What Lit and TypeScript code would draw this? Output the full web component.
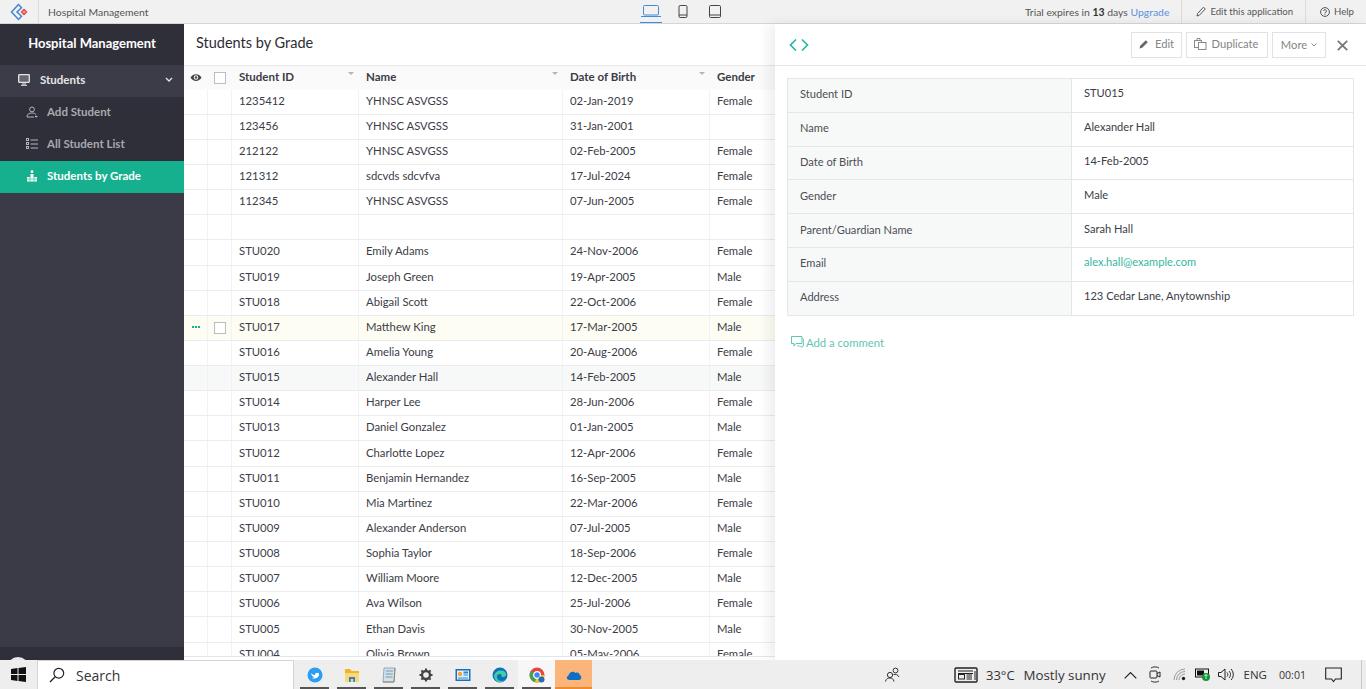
import { LitElement, css, html, svg } from 'lit';
import { customElement } from 'lit/decorators.js';

const ROWS = [
  ['1235412', 'YHNSC ASVGSS', '02-Jan-2019', 'Female'],
  ['123456', 'YHNSC ASVGSS', '31-Jan-2001', ''],
  ['212122', 'YHNSC ASVGSS', '02-Feb-2005', 'Female'],
  ['121312', 'sdcvds sdcvfva', '17-Jul-2024', 'Female'],
  ['112345', 'YHNSC ASVGSS', '07-Jun-2005', 'Female'],
  ['', '', '', ''],
  ['STU020', 'Emily Adams', '24-Nov-2006', 'Female'],
  ['STU019', 'Joseph Green', '19-Apr-2005', 'Male'],
  ['STU018', 'Abigail Scott', '22-Oct-2006', 'Female'],
  ['STU017', 'Matthew King', '17-Mar-2005', 'Male'],
  ['STU016', 'Amelia Young', '20-Aug-2006', 'Female'],
  ['STU015', 'Alexander Hall', '14-Feb-2005', 'Male'],
  ['STU014', 'Harper Lee', '28-Jun-2006', 'Female'],
  ['STU013', 'Daniel Gonzalez', '01-Jan-2005', 'Male'],
  ['STU012', 'Charlotte Lopez', '12-Apr-2006', 'Female'],
  ['STU011', 'Benjamin Hernandez', '16-Sep-2005', 'Male'],
  ['STU010', 'Mia Martinez', '22-Mar-2006', 'Female'],
  ['STU009', 'Alexander Anderson', '07-Jul-2005', 'Male'],
  ['STU008', 'Sophia Taylor', '18-Sep-2006', 'Female'],
  ['STU007', 'William Moore', '12-Dec-2005', 'Male'],
  ['STU006', 'Ava Wilson', '25-Jul-2006', 'Female'],
  ['STU005', 'Ethan Davis', '30-Nov-2005', 'Male'],
  ['STU004', 'Olivia Brown', '05-May-2006', 'Female'],
];

const DETAILS = [
  ['Student ID', 'STU015'],
  ['Name', 'Alexander Hall'],
  ['Date of Birth', '14-Feb-2005'],
  ['Gender', 'Male'],
  ['Parent/Guardian Name', 'Sarah Hall'],
  ['Email', 'alex.hall@example.com'],
  ['Address', '123 Cedar Lane, Anytownship'],
];

const icon = (w: number, h: number, body: unknown) =>
  html`<svg width=${w} height=${h} viewBox="0 0 ${w} ${h}" fill="none">${body}</svg>`;

@customElement('app-root')
export class AppRoot extends LitElement {
  static styles = css`
    :host {
      display: flex;
      flex-direction: column;
      width: 1366px;
      height: 689px;
      overflow: hidden;
      font-family: Lato, 'Liberation Sans', sans-serif;
      font-size: 11.3px;
      color: #3c3c46;
      background: #fff;
    }
    svg {
      display: block;
      flex: none;
    }

    /* top bar */
    .topbar {
      flex: none;
      height: 23px;
      display: flex;
      align-items: center;
      background: #f1f1f1;
      border-bottom: 1px solid #d6d6d6;
      position: relative;
      font-size: 10.4px;
      color: #555;
    }
    .logo {
      width: 38px;
      height: 23px;
      display: flex;
      align-items: center;
      justify-content: center;
      border-right: 1px solid #dcdcdc;
    }
    .app-name {
      padding-left: 9px;
    }
    .devices {
      position: absolute;
      left: 640px;
      top: 0;
      display: flex;
      height: 23px;
    }
    .device {
      width: 22px;
      margin-right: 10px;
      height: 23px;
      display: flex;
      align-items: flex-start;
      justify-content: center;
      padding-top: 5px;
      box-sizing: border-box;
    }
    .device.on {
      border-bottom: 1px solid #3f8be0;
    }
    .top-right {
      margin-left: auto;
      display: flex;
      height: 23px;
      align-items: center;
    }
    .trial {
      padding-right: 12px;
      color: #555;
    }
    .trial b {
      font-weight: 700;
      color: #333;
    }
    .trial a {
      color: #5b8fdc;
    }
    .top-link {
      display: flex;
      align-items: center;
      gap: 4px;
      height: 23px;
      border-left: 1px solid #dcdcdc;
      padding: 0 12px 0 14px;
      font-size: 9.6px;
    }

    /* body */
    .body {
      flex: 1;
      min-height: 0;
      display: flex;
    }

    .sidebar {
      flex: none;
      width: 184px;
      display: flex;
      flex-direction: column;
      background: #3a3b46;
      color: #fff;
    }
    .brand {
      height: 38px;
      padding-bottom: 3px;
      background: #2f2f3a;
      display: flex;
      align-items: center;
      justify-content: center;
      font-size: 13px;
      font-weight: 700;
      border-bottom: 1px solid #3a3b46;
    }
    .group {
      height: 27px;
      padding: 0 11px 4px 18px;
      display: flex;
      align-items: center;
      gap: 10px;
      font-weight: 700;
      font-size: 11.5px;
      color: #e6e6e8;
      background: #3b3c47;
    }
    .group span {
      flex: 1;
    }
    .subs {
      background: #2f2f3a;
    }
    .sub {
      height: 32px;
      box-sizing: border-box;
      padding: 0 0 3px 26px;
      display: flex;
      align-items: center;
      gap: 9px;
      color: #a9a9ae;
      font-weight: 700;
      font-size: 11.5px;
    }
    .sub.on {
      background: #16b08f;
      color: #fff;
    }
    .side-foot {
      margin-top: auto;
      height: 13px;
      background: #2f2f3a;
      overflow: hidden;
      position: relative;
    }
    .side-foot i {
      position: absolute;
      left: 7px;
      top: 10px;
      width: 22px;
      height: 22px;
      border-radius: 50%;
      background: #e8e8e8;
    }

    .main {
      flex: none;
      width: 591px;
      min-width: 0;
      display: flex;
      flex-direction: column;
      overflow: hidden;
    }
    .title {
      flex: none;
      height: 37px;
      padding: 0 0 4px 12px;
      display: flex;
      align-items: center;
      font-size: 14.5px;
      color: #2c2c34;
      border-bottom: 1px solid #e8e8e8;
    }
    .grid {
      flex: 1;
      min-height: 0;
      overflow: hidden;
    }
    .grid-end {
      flex: none;
      height: 3px;
      border-top: 1px solid #e4e6ee;
    }
    .row {
      display: grid;
      grid-template-columns: 24px 24px 127px 204px 147px 65px;
      height: 25.15px;
      box-sizing: border-box;
      border-bottom: 1px solid #ececec;
      align-items: stretch;
    }
    .row > div {
      display: flex;
      align-items: center;
      padding: 0 0 3px 7px;
      border-right: 1px solid #f2f2f2;
      white-space: nowrap;
      overflow: hidden;
      box-sizing: border-box;
      min-width: 0;
    }
    .row > div:last-child {
      border-right: none;
    }
    .row.head {
      height: 23.52px;
      background: #fafafa;
      border-bottom: none;
      font-weight: 700;
      font-size: 11.5px;
      color: #3c3c46;
    }
    .row.head > div {
      border-right: none;
      position: relative;
    }
    .row.hover {
      background: #fdfdf3;
    }
    .row.sel {
      background: #f7f9f8;
    }
    .row > .c0 {
      padding: 0 0 1px 6px;
    }
    .row > .c1 {
      padding: 0 0 0 6px;
    }
    .box {
      width: 10px;
      height: 10px;
      border: 1px solid #bdbdbd;
      background: #fff;
    }
    .sort {
      position: absolute;
      right: 5px;
      top: 6px;
      width: 0;
      height: 0;
      border-left: 3px solid transparent;
      border-right: 3px solid transparent;
      border-top: 3px solid #b5b5b5;
    }
    .dots {
      display: flex;
      gap: 1px;
      margin-left: 2px;
    }
    .dots i {
      width: 2px;
      height: 2px;
      background: #16b08f;
    }

    .panel {
      flex: 1;
      min-width: 0;
      background: #fff;
      box-shadow: -6px 0 12px rgba(0, 0, 0, 0.07);
      position: relative;
    }
    .panel-head {
      height: 41px;
      border-bottom: 1px solid #e8e8e8;
      display: flex;
      align-items: center;
      padding: 0 18px 0 14px;
    }
    .actions {
      margin-left: auto;
      display: flex;
      gap: 4px;
      align-items: center;
    }
    .btn {
      height: 26px;
      box-sizing: border-box;
      border: 1px solid #e2e2e2;
      display: flex;
      align-items: center;
      justify-content: center;
      gap: 5px;
      color: #858585;
      font-size: 11.2px;
      padding-bottom: 2px;
    }
    .btn.edit {
      width: 51px;
      gap: 6px;
    }
    .btn.dup {
      width: 82px;
      padding-right: 2px;
    }
    .btn.more {
      width: 54px;
      padding-bottom: 0;
      gap: 4px;
    }
    .close {
      margin: 2px 0 0 7px;
    }
    .detail {
      margin: 12px 12px 0;
      border: 1px solid #e6e6e6;
      border-bottom: none;
      display: grid;
      grid-template-columns: 284px 1fr;
    }
    .detail > div {
      height: 33.8px;
      box-sizing: border-box;
      border-bottom: 1px solid #e6e6e6;
      display: flex;
      align-items: center;
      padding: 0 0 3px 12px;
      font-size: 11.1px;
    }
    .detail .k {
      background: #f7f9f8;
      border-right: 1px solid #e6e6e6;
      color: #4d4d57;
    }
    .detail .v {
      color: #3c3c46;
      padding-bottom: 5px;
    }
    .detail a {
      color: #35b8a0;
    }
    .comment {
      display: flex;
      align-items: center;
      gap: 2px;
      margin: 20px 0 0 16px;
      color: #5fc6b4;
    }

    /* windows taskbar */
    .taskbar {
      flex: none;
      height: 29px;
      background: #eeeeee;
      display: flex;
      align-items: center;
      font-family: 'Open Sans', 'Noto Sans', sans-serif;
      color: #222;
      position: relative;
    }
    .start {
      width: 37px;
      display: flex;
      justify-content: center;
    }
    .search {
      width: 257px;
      height: 29px;
      box-sizing: border-box;
      background: #fff;
      border: 1px solid #d4d4d4;
      border-bottom: none;
      display: flex;
      align-items: center;
      padding-left: 11px;
      gap: 11px;
      font-size: 14px;
      color: #333;
    }
    .apps {
      display: flex;
      height: 29px;
      padding-left: 2px;
    }
    .app {
      width: 37px;
      height: 29px;
      box-sizing: border-box;
      display: flex;
      align-items: center;
      justify-content: center;
      position: relative;
    }
    .app::after {
      content: '';
      position: absolute;
      left: 4px;
      right: 4px;
      bottom: 0;
      height: 2px;
      background: #555;
    }
    .app.lit {
      background: #f7f7f7;
    }
    .app.active {
      background: #fbb57a;
    }
    .app.active::after {
      left: 0;
      right: 0;
      background: #f08a2c;
    }
    .tray {
      margin-left: auto;
      display: flex;
      align-items: center;
      height: 29px;
      font-size: 11.5px;
      color: #333;
    }
    .tray-people {
      margin-right: 54px;
    }
    .tray-news {
      margin-right: 8px;
    }
    .temp {
      font-size: 13px;
      margin-right: 9px;
      white-space: nowrap;
    }
    .sky {
      font-size: 13.3px;
      margin-right: 18px;
      white-space: nowrap;
    }
    .tray-chevron,
    .tray-meet {
      margin-right: 12px;
    }
    .tray-wifi {
      margin-right: 9px;
    }
    .tray-battery {
      margin-right: 7px;
    }
    .tray-sound {
      margin-right: 9px;
    }
    .clock {
      font-size: 10.6px;
      margin: 0 19px 0 12px;
    }
    .show-desktop {
      width: 1px;
      height: 29px;
      background: #c8c8c8;
      margin-left: 19px;
      margin-right: 4px;
    }
  `;

  private renderLogo() {
    return icon(
      18,
      18,
      svg`<path d="M8.5 1.5 L1.5 9 L8.5 16.5 L11.5 13.3 L7 9 L11.5 4.7 Z" stroke="#3f86d8" stroke-width="1.5"/>
        <path d="M14 6.5 L16.5 9 L14 11.5 L11.5 9 Z" fill="#fff" stroke="#e0433e" stroke-width="1.4"/>
        <circle cx="14" cy="9" r="0.8" fill="#e0433e"/>`
    );
  }

  private renderTopbar() {
    return html`
      <div class="topbar">
        <div class="logo">${this.renderLogo()}</div>
        <div class="app-name">Hospital Management</div>
        <div class="devices">
          <div class="device on">
            ${icon(20, 12, svg`<rect x="2.5" y="0.5" width="15" height="9.5" rx="1" stroke="#3f8be0"/><path d="M0 11.5 H20" stroke="#3f8be0"/>`)}
          </div>
          <div class="device">
            ${icon(10, 13, svg`<rect x="1" y="0.5" width="8" height="12" rx="1.2" stroke="#444"/><path d="M1 10 H9" stroke="#444"/>`)}
          </div>
          <div class="device">
            ${icon(12, 13, svg`<rect x="0.5" y="0.5" width="11" height="12" rx="1.2" stroke="#444"/><path d="M0.5 10 H11.5" stroke="#444"/>`)}
          </div>
        </div>
        <div class="top-right">
          <div class="trial">Trial expires in <b>13</b> days <a>Upgrade</a></div>
          <div class="top-link">
            ${icon(10, 11, svg`<path d="M1 10 L1.6 7.5 L7.5 1.2 L9.3 3 L3.3 9.3 Z" stroke="#555"/>`)}
            <span>Edit this application</span>
          </div>
          <div class="top-link">
            ${icon(10, 10, svg`<circle cx="5" cy="5" r="4.4" stroke="#555"/><path d="M3.5 4 A1.5 1.5 0 1 1 5 5.6 V6.4 M5 7.2 V8" stroke="#555" stroke-width="0.9"/>`)}
            <span>Help</span>
          </div>
        </div>
      </div>
    `;
  }

  private renderSidebar() {
    return html`
      <nav class="sidebar">
        <div class="brand">Hospital Management</div>
        <div class="group">
          ${icon(12, 12, svg`<rect x="0.7" y="0.7" width="10.6" height="7.6" rx="0.5" stroke="#e6e6e8" stroke-width="1.3" fill="#e6e6e8" fill-opacity="0.25"/><path d="M4 10 H8 M3 11.3 H9" stroke="#e6e6e8"/>`)}
          <span>Students</span>
          ${icon(8, 5, svg`<path d="M1 1 L4 4 L7 1" stroke="#e6e6e8" stroke-width="1.3"/>`)}
        </div>
        <div class="subs">
          <div class="sub">
            ${icon(12, 12, svg`<circle cx="6" cy="3.4" r="2.4" stroke="#b5b5ba"/><path d="M1 11 C1 8 3 7 6 7 C8 7 9 7.5 10 8.5 M1 11 H8 M10 9.5 V11.5 M9 10.5 H11.5" stroke="#b5b5ba"/>`)}
            <span>Add Student</span>
          </div>
          <div class="sub">
            ${icon(12, 12, svg`<path d="M4.5 2 H12 M4.5 6 H12 M4.5 10 H12" stroke="#b5b5ba"/><rect x="0.5" y="0.5" width="2" height="2" stroke="#b5b5ba"/><rect x="0.5" y="4.5" width="2" height="2" stroke="#b5b5ba"/><rect x="0.5" y="8.5" width="2" height="2" stroke="#b5b5ba"/>`)}
            <span>All Student List</span>
          </div>
          <div class="sub on">
            ${icon(12, 12, svg`<circle cx="6" cy="1.7" r="1.4" fill="#fff"/><path d="M4.5 4 H7.5 V7 H4.5 Z M1 7 H11 V11.5 H1 Z" fill="#fff"/><path d="M1 9 H11 M4 7 V11.5 M8 7 V11.5" stroke="#16b08f" stroke-width="0.6"/>`)}
            <span>Students by Grade</span>
          </div>
        </div>
        <div class="side-foot"><i></i></div>
      </nav>
    `;
  }

  private renderTable() {
    return html`
      <section class="main">
        <div class="title">Students by Grade</div>
        <div class="grid">
          <div class="row head">
            <div class="c0">
              ${icon(12, 9, svg`<path d="M0.5 4.5 C3 0 9 0 11.5 4.5 C9 9 3 9 0.5 4.5 Z" fill="#444"/><circle cx="6" cy="4.5" r="2.2" fill="#fff"/><circle cx="6" cy="4.5" r="1.2" fill="#444"/>`)}
            </div>
            <div class="c1"><span class="box"></span></div>
            <div>Student ID<span class="sort"></span></div>
            <div>Name<span class="sort"></span></div>
            <div>Date of Birth<span class="sort"></span></div>
            <div>Gender</div>
          </div>
          ${ROWS.map((r) => {
            const hover = r[0] === 'STU017';
            const sel = r[0] === 'STU015';
            return html`
              <div class="row ${hover ? 'hover' : ''} ${sel ? 'sel' : ''}">
                <div class="c0">
                  ${hover ? html`<span class="dots"><i></i><i></i><i></i></span>` : ''}
                </div>
                <div class="c1">${hover ? html`<span class="box"></span>` : ''}</div>
                <div>${r[0]}</div>
                <div>${r[1]}</div>
                <div>${r[2]}</div>
                <div>${r[3]}</div>
              </div>
            `;
          })}
        </div>
        <div class="grid-end"></div>
      </section>
    `;
  }

  private renderPanel() {
    return html`
      <aside class="panel">
        <div class="panel-head">
          ${icon(20, 14, svg`<path d="M7 1.5 L1.5 7 L7 12.5 M13 1.5 L18.5 7 L13 12.5" stroke="#25b8a0" stroke-width="1.7"/>`)}
          <div class="actions">
            <div class="btn edit">
              ${icon(10, 10, svg`<path d="M0.5 9.5 L1.2 6.8 L6.8 1.2 L8.8 3.2 L3.2 8.8 Z" fill="#666"/>`)}
              <span>Edit</span>
            </div>
            <div class="btn dup">
              ${icon(13, 12, svg`<rect x="0.5" y="2.5" width="7" height="7" stroke="#8a8a8a"/><rect x="4.5" y="4.5" width="7.5" height="7" fill="#fff" stroke="#8a8a8a"/><path d="M3 2.5 V0.5 H6 V2.5" stroke="#8a8a8a"/>`)}
              <span>Duplicate</span>
            </div>
            <div class="btn more">
              <span>More</span>
              ${icon(6, 4, svg`<path d="M0.5 0.5 L3 3 L5.5 0.5" stroke="#8a8a8a"/>`)}
            </div>
            <div class="close">
              ${icon(11, 11, svg`<path d="M0.8 0.8 L10.2 10.2 M10.2 0.8 L0.8 10.2" stroke="#777" stroke-width="1.8"/>`)}
            </div>
          </div>
        </div>
        <div class="detail">
          ${DETAILS.map(
            ([k, v]) => html`
              <div class="k">${k}</div>
              <div class="v">${k === 'Email' ? html`<a>${v}</a>` : v}</div>
            `
          )}
        </div>
        <div class="comment">
          ${icon(13, 12, svg`<path d="M0.5 0.5 H11 V7.5 H5 L3 10 V7.5 H0.5 Z" stroke="#5fc6b4"/><path d="M11 3 H12.5 V10 H11 V11.5 L9 10 H6" stroke="#5fc6b4" stroke-width="0.8"/>`)}
          <span>Add a comment</span>
        </div>
      </aside>
    `;
  }

  private renderTaskbar() {
    const apps = [
      svg`<circle cx="8" cy="8" r="7.5" fill="#2a9df4"/><path d="M4 6 C6 8 7 8 8 8 C8 5.5 10.5 5 12 6.5 L12 8 C11.5 11 8 12.5 4.5 11 C6 11 7 10.5 7 10 C5 9.5 4.5 8 4 6 Z" fill="#fff"/>`,
      svg`<path d="M1 2 H6 L7.5 4 H15 V15 H1 Z" fill="#f0b429"/><rect x="1" y="6" width="14" height="9" fill="#f9d976"/><path d="M5 15 V10 H11 V15 H9.3 V12 H6.7 V15 Z" fill="#2a7fd0"/>`,
      svg`<path d="M3 1 H14 L13 15 H2 Z" fill="#cfe2ee" stroke="#7d9aab" stroke-width="0.8"/><path d="M5 4 H12 M4.8 7 H11.8 M4.5 10 H11.5" stroke="#6a8596" stroke-width="0.8"/><path d="M2 15 H13 L14 1" stroke="#8a7a5a" stroke-width="0.8"/>`,
      svg`<circle cx="8" cy="8" r="4" stroke="#444" stroke-width="2.4"/><path d="M8 1.5 V4 M8 12 V14.5 M1.5 8 H4 M12 8 H14.5 M3.4 3.4 L5 5 M11 11 L12.6 12.6 M12.6 3.4 L11 5 M5 11 L3.4 12.6" stroke="#444" stroke-width="2"/>`,
      svg`<rect x="0.5" y="2" width="15" height="12" fill="#1a6fb5"/><rect x="2" y="3.5" width="12" height="9" fill="#e6f1f8"/><circle cx="5" cy="7" r="2.2" fill="#f2a33a"/><rect x="8.5" y="4.5" width="4.5" height="2" fill="#2a86cf"/><rect x="8.5" y="7.5" width="4.5" height="1" fill="#2a86cf"/><path d="M3 11 H13" stroke="#2a86cf"/>`,
      svg`<circle cx="8" cy="8" r="7.5" fill="#0f6fbf"/><path d="M2 9 C3 4 9 2 13 5 C15 7 14.5 10 11 10 C9 10 9 8 10 8 C8 6 4 7 5 11 C6 14 10 15 13 13 C10 16.5 3 16 2 9 Z" fill="#3fd0a0"/>`,
      svg`<circle cx="8" cy="8" r="7.5" fill="#e8453c"/><path d="M8 8 L1.5 4.5 A7.5 7.5 0 0 0 6 15.2 Z" fill="#3aa757"/><path d="M8 8 L6 15.2 A7.5 7.5 0 0 0 15.5 8 Z" fill="#fbc02d"/><circle cx="8" cy="8" r="3.4" fill="#4285f4" stroke="#fff" stroke-width="1.2"/><circle cx="12.5" cy="12.5" r="3" fill="#1f6fb5"/>`,
      svg`<path d="M3.5 13 C0.5 13 0 9.5 2.5 8.5 C3 5 7.5 3.5 9.5 6 C12 4.8 14 6.5 13.5 8 C16 8.5 16 13 13 13 Z" fill="#0f6fc6"/>`,
    ];
    return html`
      <footer class="taskbar">
        <div class="start">
          ${icon(15, 15, svg`<path d="M0 2 L6.5 1.1 V7 H0 Z M7.5 1 L15 0 V7 H7.5 Z M0 8 H6.5 V13.9 L0 13 Z M7.5 8 H15 V15 L7.5 14 Z" fill="#111"/>`)}
        </div>
        <div class="search">
          ${icon(16, 16, svg`<circle cx="9.8" cy="6.2" r="4.9" stroke="#222" stroke-width="1.2"/><path d="M6.2 9.8 L1 15" stroke="#222" stroke-width="1.3"/>`)}
          <span>Search</span>
        </div>
        <div class="apps">
          ${apps.map(
            (a, i) =>
              html`<div class="app ${i === 7 ? 'active' : ''} ${i === 6 ? 'lit' : ''}">${icon(16, 16, a)}</div>`
          )}
        </div>
        <div class="tray">
          <div class="tray-people">
            ${icon(15, 15, svg`<circle cx="5" cy="8" r="2.6" stroke="#333"/><circle cx="10.5" cy="3.5" r="2.4" stroke="#333"/><path d="M0.5 14.5 C1 11.5 3 11 5 11 C7 11 8.5 12 9 14.5 M8.5 7.5 C10.5 7 13 7.5 14 10" stroke="#333"/>`)}
          </div>
          <div class="tray-news">
            ${icon(24, 16, svg`<rect x="1" y="1" width="22" height="14" rx="1" stroke="#222" stroke-width="1.4"/><path d="M4 4 H19 M4 6.5 H19" stroke="#222"/><rect x="4.5" y="7.5" width="6" height="4.5" stroke="#222"/><path d="M12.5 8 H18 M12.5 10 H18 M12.5 12 H18 M21 4 V13" stroke="#222"/>`)}
          </div>
          <span class="temp">33°C</span>
          <span class="sky">Mostly sunny</span>
          <div class="tray-chevron">
            ${icon(13, 8, svg`<path d="M0.7 7.3 L6.5 1.5 L12.3 7.3" stroke="#222" stroke-width="1.2"/>`)}
          </div>
          <div class="tray-meet">
            ${icon(12, 17, svg`<path d="M2 2 C4 0.5 8 0.5 10 2 M2 15 C4 16.5 8 16.5 10 15" stroke="#333"/><rect x="1" y="5" width="7" height="7" rx="1" stroke="#222"/><path d="M8 7.5 L11 6 V11 L8 9.5" stroke="#222"/>`)}
          </div>
          <div class="tray-wifi">
            ${icon(13, 13, svg`<path d="M1 12 A11 11 0 0 1 12 1 M3.5 12 A8.5 8.5 0 0 1 12 3.5 M6 12 A6 6 0 0 1 12 6" stroke="#999"/><circle cx="10.5" cy="10.5" r="1.7" fill="#222"/>`)}
          </div>
          <div class="tray-battery">
            ${icon(16, 13, svg`<rect x="0.5" y="1" width="13" height="8" stroke="#111"/><rect x="2" y="2.5" width="7" height="5" fill="#111"/><circle cx="11" cy="9" r="4" fill="#15933a"/><path d="M11 6.5 V11 M9.5 8 L11 6.5 L12.5 8" stroke="#fff" stroke-width="0.8"/>`)}
          </div>
          <div class="tray-sound">
            ${icon(17, 13, svg`<path d="M0.5 4.5 H3 L7 1 V12 L3 8.5 H0.5 Z" stroke="#222"/><path d="M9 4.5 C10 5.5 10 7.5 9 8.5 M11 3 C13 5 13 8 11 10 M13 1 C16 4 16 9 13 12" stroke="#222"/>`)}
          </div>
          <span>ENG</span>
          <span class="clock">00:01</span>
          ${icon(17, 16, svg`<path d="M0.7 1 H16.3 V12 H10.5 L8.5 14.5 L6.5 12 H0.7 Z" stroke="#222" stroke-width="1.1"/>`)}
          <div class="show-desktop"></div>
        </div>
      </footer>
    `;
  }

  render() {
    return html`
      ${this.renderTopbar()}
      <div class="body">${this.renderSidebar()}${this.renderTable()}${this.renderPanel()}</div>
      ${this.renderTaskbar()}
    `;
  }
}
